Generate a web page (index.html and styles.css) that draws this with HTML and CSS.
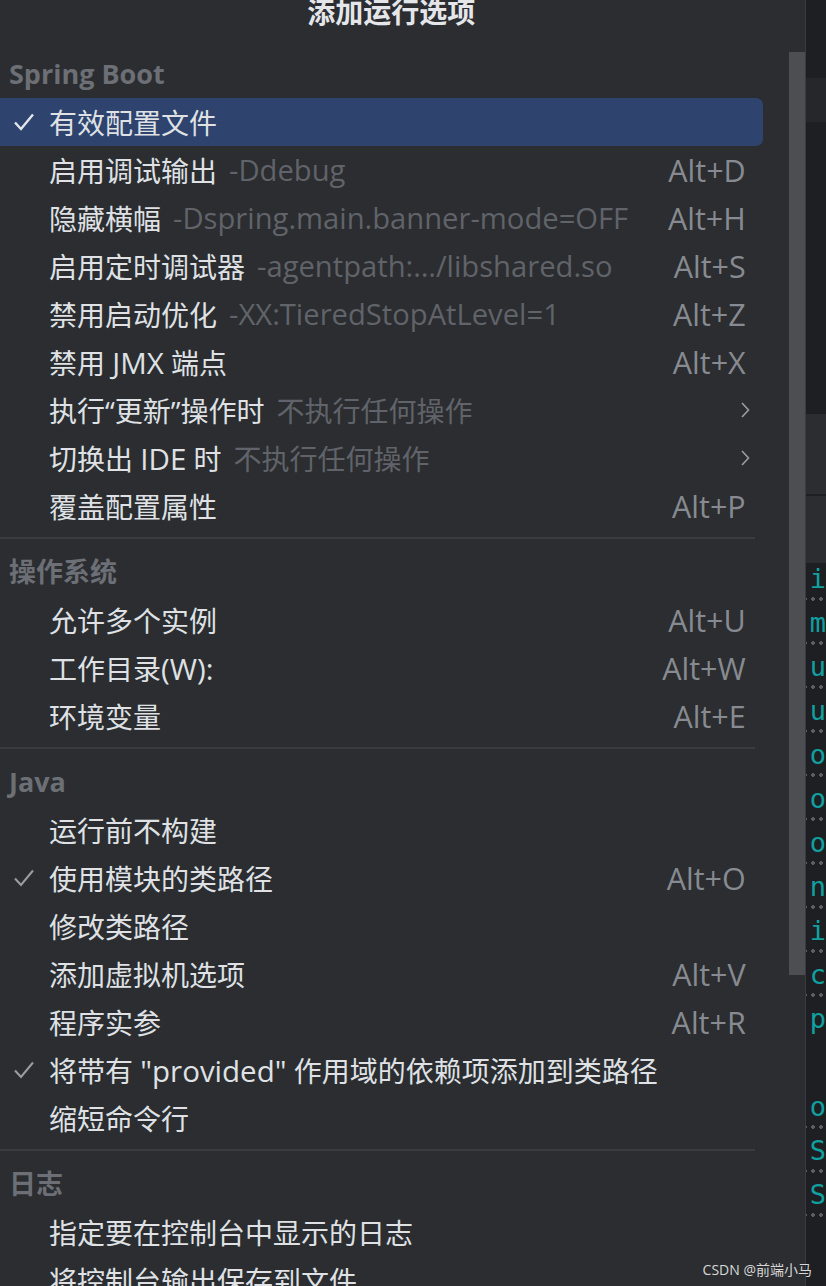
FILE: index.html
```html
<!DOCTYPE html>
<html lang="zh-CN">
<head>
    <meta charset="UTF-8">
    <meta name="viewport" content="width=device-width, initial-scale=1.0">
    <title>添加运行选项</title>
    <link rel="stylesheet" href="styles.css">
</head>
<body>

    <div class="screen">
        <div class="popup">
            <div class="menu">
                <h1 class="title">添加运行选项</h1>

                <div class="group-title">Spring Boot</div>
                <div class="item selected">
                    <span class="check"><svg width="22" height="20" viewBox="0 0 22 20"><path d="M2 10.5 L8 17 L20 2.5"/></svg></span>
                    <span class="label">有效配置文件</span>
                </div>
                <div class="item">
                    <span class="check"></span>
                    <span class="label">启用调试输出</span><span class="hint">-Ddebug</span>
                    <span class="shortcut">Alt+D</span>
                </div>
                <div class="item">
                    <span class="check"></span>
                    <span class="label">隐藏横幅</span><span class="hint">-Dspring.main.banner-mode=OFF</span>
                    <span class="shortcut">Alt+H</span>
                </div>
                <div class="item">
                    <span class="check"></span>
                    <span class="label">启用定时调试器</span><span class="hint">-agentpath:…/libshared.so</span>
                    <span class="shortcut">Alt+S</span>
                </div>
                <div class="item">
                    <span class="check"></span>
                    <span class="label">禁用启动优化</span><span class="hint">-XX:TieredStopAtLevel=1</span>
                    <span class="shortcut">Alt+Z</span>
                </div>
                <div class="item">
                    <span class="check"></span>
                    <span class="label">禁用 <span class="latin">JMX</span> 端点</span>
                    <span class="shortcut">Alt+X</span>
                </div>
                <div class="item">
                    <span class="check"></span>
                    <span class="label">执行“更新”操作时</span><span class="hint hint-cjk">不执行任何操作</span>
                    <span class="shortcut"><svg class="chevron" width="10" height="18" viewBox="0 0 10 18"><path d="M2 2 L8.5 9 L2 16"/></svg></span>
                </div>
                <div class="item">
                    <span class="check"></span>
                    <span class="label">切换出 <span class="latin">IDE</span> 时</span><span class="hint hint-cjk">不执行任何操作</span>
                    <span class="shortcut"><svg class="chevron" width="10" height="18" viewBox="0 0 10 18"><path d="M2 2 L8.5 9 L2 16"/></svg></span>
                </div>
                <div class="item">
                    <span class="check"></span>
                    <span class="label">覆盖配置属性</span>
                    <span class="shortcut">Alt+P</span>
                </div>

                <div class="separator"></div>
                <div class="group-title">操作系统</div>
                <div class="item">
                    <span class="check"></span>
                    <span class="label">允许多个实例</span>
                    <span class="shortcut">Alt+U</span>
                </div>
                <div class="item">
                    <span class="check"></span>
                    <span class="label">工作目录<span class="latin">(W):</span></span>
                    <span class="shortcut">Alt+W</span>
                </div>
                <div class="item">
                    <span class="check"></span>
                    <span class="label">环境变量</span>
                    <span class="shortcut">Alt+E</span>
                </div>

                <div class="separator"></div>
                <div class="group-title">Java</div>
                <div class="item">
                    <span class="check"></span>
                    <span class="label">运行前不构建</span>
                </div>
                <div class="item">
                    <span class="check"><svg width="22" height="20" viewBox="0 0 22 20"><path d="M2 10.5 L8 17 L20 2.5"/></svg></span>
                    <span class="label">使用模块的类路径</span>
                    <span class="shortcut">Alt+O</span>
                </div>
                <div class="item">
                    <span class="check"></span>
                    <span class="label">修改类路径</span>
                </div>
                <div class="item">
                    <span class="check"></span>
                    <span class="label">添加虚拟机选项</span>
                    <span class="shortcut">Alt+V</span>
                </div>
                <div class="item">
                    <span class="check"></span>
                    <span class="label">程序实参</span>
                    <span class="shortcut">Alt+R</span>
                </div>
                <div class="item">
                    <span class="check"><svg width="22" height="20" viewBox="0 0 22 20"><path d="M2 10.5 L8 17 L20 2.5"/></svg></span>
                    <span class="label">将带有 <span class="latin">"provided"</span> 作用域的依赖项添加到类路径</span>
                </div>
                <div class="item">
                    <span class="check"></span>
                    <span class="label">缩短命令行</span>
                </div>

                <div class="separator"></div>
                <div class="group-title">日志</div>
                <div class="item">
                    <span class="check"></span>
                    <span class="label">指定要在控制台中显示的日志</span>
                </div>
                <div class="item">
                    <span class="check"></span>
                    <span class="label">将控制台输出保存到文件</span>
                </div>
            </div>

            <div class="scrollbar">
                <div class="thumb"></div>
            </div>
        </div>

        <div class="editor">
            <div class="band band-top"></div>
            <div class="band band-tab"></div>
            <div class="band band-dark"></div>
            <div class="band band-panel"></div>
            <div class="band band-line"></div>
            <div class="band band-panel2"></div>
            <div class="code">
                <div class="code-line">i</div>
                <div class="code-line">m</div>
                <div class="code-line">u</div>
                <div class="code-line">u</div>
                <div class="code-line">o</div>
                <div class="code-line">o</div>
                <div class="code-line">o</div>
                <div class="code-line">n</div>
                <div class="code-line">i</div>
                <div class="code-line">c</div>
                <div class="code-line plain">p</div>
                <div class="code-line plain"></div>
                <div class="code-line">o</div>
                <div class="code-line">S</div>
                <div class="code-line">S</div>
            </div>
        </div>

        <div class="watermark">CSDN @前端小马</div>
    </div>

</body>
</html>
```

FILE: styles.css
```css
body {
    margin: 0;
    padding: 0;
    background-color: #1e1f22;
    font-family: "Open Sans", "Noto Sans CJK SC", sans-serif;
    color: #dfe1e5;
}

.screen {
    position: relative;
    display: flex;
    width: 826px;
    height: 1286px;
    overflow: hidden;
}

/* popup */

.popup {
    display: flex;
    width: 805px;
    background-color: #2b2d30;
}

.menu {
    flex: 1;
}

.title {
    margin: -8px 0 9px 0;
    padding-right: 6px;
    font-size: 28px;
    line-height: 40px;
    font-weight: 700;
    text-align: center;
    color: #e4e6ea;
}

.group-title {
    padding: 19px 0 10px 9px;
    font-size: 27px;
    line-height: 28px;
    font-weight: 700;
    color: #6c6f75;
}

.separator {
    height: 2px;
    margin: 7px 34px 0 0;
    background-color: #393b40;
}

.item {
    display: flex;
    align-items: center;
    height: 48px;
    margin-right: 26px;
    padding-right: 17px;
    font-size: 28px;
    white-space: nowrap;
}

.item.selected {
    background-color: #2e436e;
    border-radius: 0 7px 7px 0;
}

.check {
    display: flex;
    justify-content: center;
    width: 49px;
    padding-right: 2px;
    box-sizing: border-box;
}

.check svg path {
    fill: none;
    stroke: #9a9da3;
    stroke-width: 2;
}

.selected .check svg path {
    stroke: #e4e6ea;
    stroke-width: 2.4;
}

.label {
    color: #dfe1e5;
}

.latin {
    font-size: 29.5px;
}

.hint {
    margin-left: 12px;
    font-size: 29.2px;
    color: #606369;
}

.hint-cjk {
    font-size: 28px;
}

.shortcut {
    margin-left: auto;
    font-size: 30.5px;
    color: #878b91;
}

.chevron {
    display: block;
    margin-right: -4px;
}

.chevron path {
    fill: none;
    stroke: #9a9da3;
    stroke-width: 1.6;
}

.scrollbar {
    width: 16px;
    padding-top: 52px;
}

.thumb {
    height: 923px;
    background-color: #4c4e52;
}

/* editor strip on the right */

.editor {
    flex: 1;
    border-left: 1px solid #393b40;
    background-color: #1e1f22;
}

.band-top { height: 78px; background-color: #1e1f22; }
.band-tab { height: 44px; background-color: #26272b; }
.band-dark { height: 292px; background-color: #1e1f22; }
.band-panel { height: 80px; background-color: #2b2d30; }
.band-line { height: 2px; background-color: #1e1f22; }
.band-panel2 { height: 67px; background-color: #2b2d30; }

.code-line {
    height: 44px;
    padding-left: 4px;
    font-family: "DejaVu Sans Mono", monospace;
    font-size: 27px;
    line-height: 32px;
    color: #10a0a0;
    background-image: radial-gradient(circle, #5a5d63 1.6px, transparent 2px);
    background-size: 8px 6px;
    background-repeat: repeat-x;
    background-position: 3px 33px;
}

.code-line.plain {
    background-image: none;
}

.watermark {
    position: absolute;
    right: 14px;
    bottom: 6px;
    font-size: 14px;
    line-height: 20px;
    color: #d8d8d8;
}
```
